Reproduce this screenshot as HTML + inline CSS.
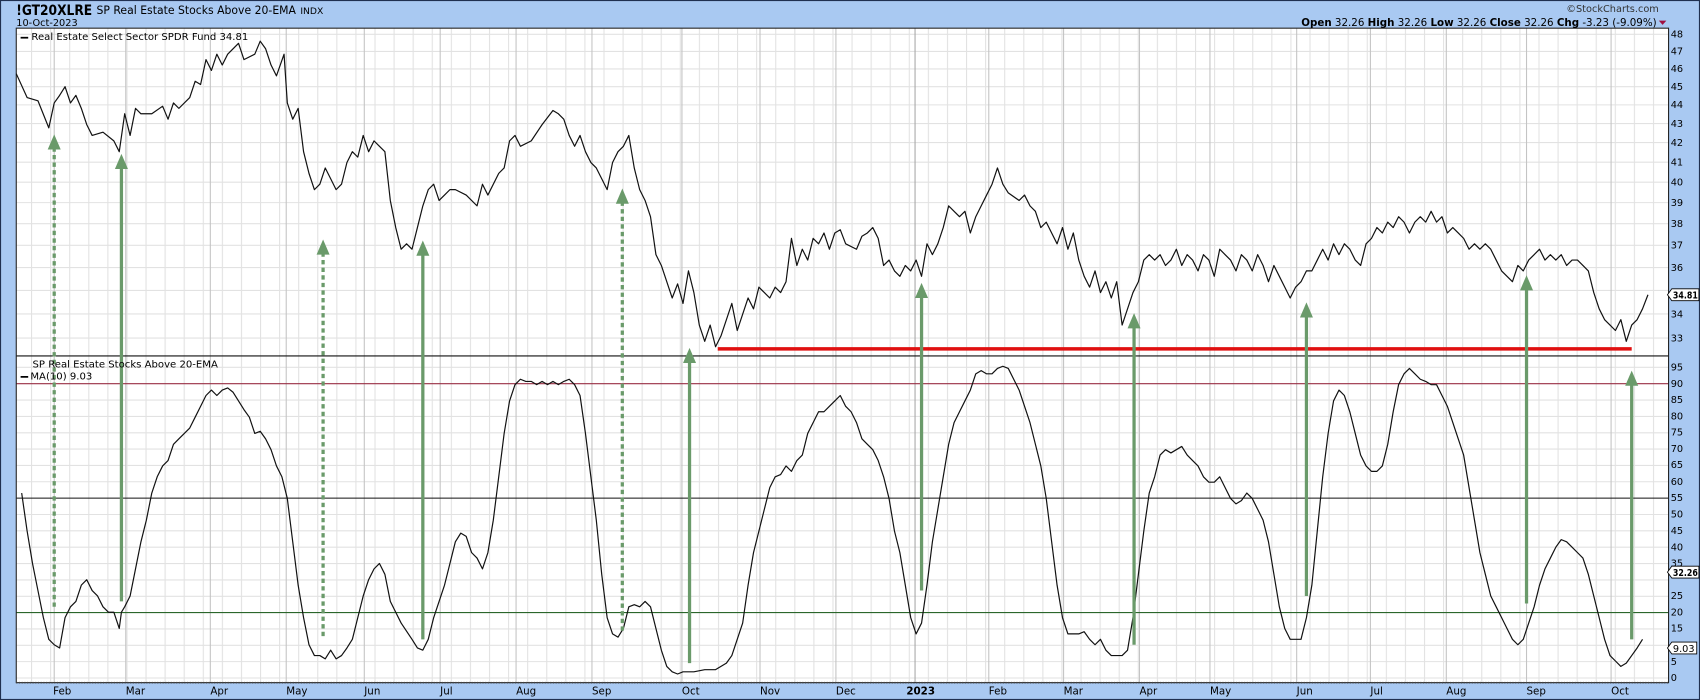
<!DOCTYPE html>
<html><head><meta charset="utf-8"><style>
html,body{margin:0;padding:0;background:#a9c9f2;}
svg{display:block}
text{font-family:"DejaVu Sans","Liberation Sans",sans-serif;}
</style></head><body>
<svg width="1700" height="700" viewBox="0 0 1568 646" preserveAspectRatio="none" xmlns="http://www.w3.org/2000/svg">
<defs>
<pattern id="wk" x="11" y="0" width="17.6" height="646" patternUnits="userSpaceOnUse">
<line x1="0.5" y1="0" x2="0.5" y2="646" stroke="#e2e2e2" stroke-width="1"/>
</pattern>
</defs>
<rect x="0" y="0" width="1568" height="646" fill="#a9c9f2"/>
<rect x="0.5" y="0.5" width="1567" height="645" fill="none" stroke="#203050" stroke-width="1"/>
<rect x="15" y="26" width="1524" height="604" fill="#fff"/>
<rect x="15" y="26" width="1524" height="604" fill="url(#wk)"/>
<g stroke="#e2e2e2" stroke-width="1">
<line x1="15" x2="1539" y1="289.7" y2="289.7"/><line x1="15" x2="1539" y1="268" y2="268"/><line x1="15" x2="1539" y1="246.9" y2="246.9"/><line x1="15" x2="1539" y1="226.4" y2="226.4"/><line x1="15" x2="1539" y1="206.4" y2="206.4"/><line x1="15" x2="1539" y1="187" y2="187"/><line x1="15" x2="1539" y1="168.1" y2="168.1"/><line x1="15" x2="1539" y1="149.7" y2="149.7"/><line x1="15" x2="1539" y1="131.6" y2="131.6"/><line x1="15" x2="1539" y1="114" y2="114"/><line x1="15" x2="1539" y1="96.8" y2="96.8"/><line x1="15" x2="1539" y1="80" y2="80"/><line x1="15" x2="1539" y1="63.6" y2="63.6"/><line x1="15" x2="1539" y1="47.5" y2="47.5"/><line x1="15" x2="1539" y1="31.7" y2="31.7"/><line x1="15" x2="1539" y1="312" y2="312"/>
<line x1="15" x2="1539" y1="610.6" y2="610.6"/><line x1="15" x2="1539" y1="595.5" y2="595.5"/><line x1="15" x2="1539" y1="580.4" y2="580.4"/><line x1="15" x2="1539" y1="550.3" y2="550.3"/><line x1="15" x2="1539" y1="535.2" y2="535.2"/><line x1="15" x2="1539" y1="520.1" y2="520.1"/><line x1="15" x2="1539" y1="505" y2="505"/><line x1="15" x2="1539" y1="489.9" y2="489.9"/><line x1="15" x2="1539" y1="474.8" y2="474.8"/><line x1="15" x2="1539" y1="444.6" y2="444.6"/><line x1="15" x2="1539" y1="429.5" y2="429.5"/><line x1="15" x2="1539" y1="414.4" y2="414.4"/><line x1="15" x2="1539" y1="399.4" y2="399.4"/><line x1="15" x2="1539" y1="384.3" y2="384.3"/><line x1="15" x2="1539" y1="369.2" y2="369.2"/><line x1="15" x2="1539" y1="339" y2="339"/><line x1="15" x2="1539" y1="625.7" y2="625.7"/>
</g>
<g stroke="#c4c4c4" stroke-width="1">
<line x1="50" x2="50" y1="26" y2="630"/><line x1="116" x2="116" y1="26" y2="630"/><line x1="194" x2="194" y1="26" y2="630"/><line x1="264" x2="264" y1="26" y2="630"/><line x1="336" x2="336" y1="26" y2="630"/><line x1="406" x2="406" y1="26" y2="630"/><line x1="476" x2="476" y1="26" y2="630"/><line x1="546" x2="546" y1="26" y2="630"/><line x1="629" x2="629" y1="26" y2="630"/><line x1="701" x2="701" y1="26" y2="630"/><line x1="771" x2="771" y1="26" y2="630"/><line x1="844" x2="844" y1="26" y2="630" stroke="#a8a8a8"/><line x1="912" x2="912" y1="26" y2="630"/><line x1="981" x2="981" y1="26" y2="630"/><line x1="1051" x2="1051" y1="26" y2="630"/><line x1="1116" x2="1116" y1="26" y2="630"/><line x1="1196" x2="1196" y1="26" y2="630"/><line x1="1264" x2="1264" y1="26" y2="630"/><line x1="1334" x2="1334" y1="26" y2="630"/><line x1="1408" x2="1408" y1="26" y2="630"/><line x1="1486" x2="1486" y1="26" y2="630"/>
</g>
<line x1="15" x2="1539" y1="354.1" y2="354.1" stroke="#992f44" stroke-width="1"/>
<line x1="15" x2="1539" y1="459.7" y2="459.7" stroke="#111" stroke-width="1"/>
<line x1="15" x2="1539" y1="565.3" y2="565.3" stroke="#2b662b" stroke-width="1"/>
<line x1="15" x2="1539" y1="328.5" y2="328.5" stroke="#111" stroke-width="1"/>
<rect x="15" y="26" width="1524" height="604" fill="none" stroke="#222" stroke-width="1"/>
<line x1="15" x2="1539" y1="630" y2="630" stroke="#444" stroke-width="1.5" stroke-dasharray="1,1.5"/>

<polyline fill="none" stroke="#111" stroke-width="1.1" stroke-linejoin="round" points="15,68 25,90 35,93 45,118 50,95 55,88 60,80 65,95 70,88 75,100 80,115 85,125 95,122 105,130 110,140 115,105 120,125 125,100 130,105 140,105 150,98 155,110 160,95 165,100 175,90 180,75 185,78 190,55 195,65 200,50 205,60 210,50 220,40 225,55 235,50 240,38 245,45 250,60 255,70 262,50 265,95 270,110 275,100 280,140 285,160 290,175 295,170 300,155 305,165 310,175 315,170 320,150 325,140 330,145 335,125 340,140 345,130 350,135 355,140 360,185 365,210 370,230 375,225 380,230 385,210 390,190 395,175 400,170 405,185 410,180 415,175 420,175 430,180 440,190 445,170 450,180 460,160 465,155 470,130 475,125 480,135 490,130 500,115 510,102 515,105 520,110 525,125 530,135 535,125 540,140 545,150 550,155 555,165 560,175 565,150 570,140 575,135 580,125 585,155 590,175 595,185 600,200 605,235 610,245 615,260 620,275 625,262 630,280 635,250 640,270 645,300 650,315 655,300 660,320 665,310 670,295 675,280 680,305 685,290 690,275 695,285 700,265 705,270 710,275 715,265 720,270 725,260 730,220 735,245 740,230 745,240 750,220 755,225 760,215 765,230 770,215 775,212 780,225 790,230 795,218 800,215 805,210 810,220 815,245 820,240 825,250 830,255 835,245 840,250 845,240 850,255 855,225 860,235 865,225 870,210 875,190 880,195 885,200 890,195 895,215 900,200 905,190 910,180 915,170 920,155 925,170 930,178 940,185 945,180 950,190 955,195 960,210 965,205 970,215 975,225 980,210 985,230 990,215 995,240 1000,255 1005,265 1010,250 1015,270 1020,260 1025,275 1030,260 1035,300 1040,285 1045,270 1050,260 1055,240 1060,235 1065,240 1070,235 1075,245 1080,240 1085,230 1090,245 1095,235 1100,240 1105,250 1110,235 1115,240 1120,255 1125,230 1130,235 1135,240 1140,250 1145,235 1150,240 1155,250 1160,235 1165,245 1170,260 1175,245 1180,255 1185,265 1190,275 1195,265 1200,260 1205,250 1210,250 1215,240 1220,230 1225,240 1230,225 1235,235 1240,225 1245,230 1250,240 1255,245 1260,225 1265,220 1270,210 1275,215 1280,205 1285,210 1290,200 1295,205 1300,215 1305,205 1310,200 1315,205 1320,195 1325,205 1330,200 1335,215 1340,210 1345,215 1350,220 1355,230 1360,225 1365,230 1370,225 1375,230 1380,240 1385,250 1390,255 1395,260 1400,245 1405,250 1410,240 1415,235 1420,230 1425,240 1430,235 1435,240 1440,235 1445,245 1450,240 1455,240 1460,245 1465,250 1470,270 1475,285 1480,295 1485,300 1490,305 1495,295 1500,315 1505,300 1510,295 1515,285 1520,272"/>

<polyline fill="none" stroke="#111" stroke-width="1.1" stroke-linejoin="round" points="20,455 25,490 30,520 35,545 40,570 45,590 50,595 55,598 60,570 65,560 70,555 75,540 80,535 85,545 90,550 95,560 100,565 105,565 110,580 112,565 115,560 120,550 125,525 130,500 135,480 140,455 145,440 150,430 155,425 160,410 165,405 170,400 175,395 180,385 185,375 190,365 195,360 200,365 205,360 210,358 215,362 220,370 225,378 230,385 235,400 240,398 245,405 250,415 255,430 260,440 265,460 270,500 275,540 280,570 285,595 290,605 295,605 300,608 305,600 310,608 315,605 320,598 325,590 330,570 335,550 340,535 345,525 350,520 355,530 360,555 365,565 370,575 380,590 385,598 390,600 395,590 400,570 405,555 410,540 415,520 420,500 425,492 430,495 435,510 440,515 445,525 450,510 455,480 460,440 465,400 470,370 475,355 480,350 485,352 490,352 495,355 500,352 505,355 510,352 515,355 520,352 525,350 530,355 535,365 540,400 545,440 550,480 555,530 560,570 565,585 570,588 575,580 580,560 585,558 590,560 595,555 600,560 605,580 610,600 615,615 620,620 625,622 630,620 640,620 650,618 660,618 670,612 675,605 680,590 685,575 690,540 695,510 700,490 705,470 710,450 715,440 720,438 725,430 730,435 735,425 740,420 745,400 750,390 755,380 760,380 765,375 770,370 775,365 780,375 785,380 790,390 795,405 800,410 805,415 810,425 815,440 820,460 825,490 830,510 835,540 840,570 845,585 850,575 855,540 860,500 865,470 870,440 875,410 880,390 885,380 890,370 895,360 900,345 905,342 910,345 915,345 920,340 925,338 930,340 935,350 940,360 945,375 950,390 955,410 960,430 965,460 970,500 975,540 980,570 985,585 990,585 995,585 1000,583 1005,590 1010,595 1015,590 1020,600 1025,605 1030,605 1035,605 1040,600 1045,570 1050,530 1055,490 1060,455 1065,440 1070,420 1075,415 1080,418 1085,415 1090,412 1095,420 1100,425 1105,430 1110,440 1115,445 1120,445 1125,440 1130,450 1135,460 1140,465 1145,462 1150,455 1155,460 1160,470 1165,480 1170,500 1175,530 1180,560 1185,580 1190,590 1195,590 1200,590 1205,570 1210,540 1215,490 1220,440 1225,400 1230,370 1235,360 1240,365 1245,380 1250,400 1255,420 1260,430 1265,435 1270,435 1275,430 1280,410 1285,380 1290,355 1295,345 1300,340 1305,345 1310,350 1315,352 1320,355 1325,355 1330,365 1335,375 1340,390 1345,405 1350,420 1355,450 1360,480 1365,510 1370,530 1375,550 1380,560 1385,570 1390,580 1395,590 1400,595 1405,590 1410,575 1415,560 1420,540 1425,525 1430,515 1435,505 1440,498 1445,500 1450,505 1455,510 1460,515 1465,530 1470,550 1475,570 1480,590 1485,605 1490,610 1495,615 1500,612 1505,605 1510,598 1515,590"/>

<line x1="662" x2="1505" y1="322" y2="322" stroke="#e01010" stroke-width="3.2"/>

<g stroke="#6a9a6a" stroke-width="3" fill="#6a9a6a">
<line x1="50" x2="50" y1="136" y2="560" stroke-dasharray="4,3"/><polygon points="50,124 44,138 56,138" stroke="none"/>
<line x1="112" x2="112" y1="154" y2="555"/><polygon points="112,142 106,156 118,156" stroke="none"/>
<line x1="298" x2="298" y1="233" y2="588" stroke-dasharray="4,3"/><polygon points="298,221 292,235 304,235" stroke="none"/>
<line x1="390" x2="390" y1="234" y2="590"/><polygon points="390,222 384,236 396,236" stroke="none"/>
<line x1="574" x2="574" y1="186" y2="583" stroke-dasharray="4,3"/><polygon points="574,174 568,188 580,188" stroke="none"/>
<line x1="636" x2="636" y1="333" y2="612"/><polygon points="636,321 630,335 642,335" stroke="none"/>
<line x1="850" x2="850" y1="273" y2="545"/><polygon points="850,261 844,275 856,275" stroke="none"/>
<line x1="1046" x2="1046" y1="301" y2="595"/><polygon points="1046,289 1040,303 1052,303" stroke="none"/>
<line x1="1205" x2="1205" y1="291" y2="550"/><polygon points="1205,279 1199,293 1211,293" stroke="none"/>
<line x1="1408" x2="1408" y1="266" y2="557"/><polygon points="1408,254 1402,268 1414,268" stroke="none"/>
<line x1="1505" x2="1505" y1="354" y2="590"/><polygon points="1505,342 1499,356 1511,356" stroke="none"/>
</g>

<g font-size="11" fill="#000">
<text x="15" y="14" font-weight="bold" font-family="Liberation Sans,sans-serif" font-size="13" textLength="70" lengthAdjust="spacingAndGlyphs">!GT20XLRE</text>
<text x="89" y="13" font-family="Liberation Sans,sans-serif" font-size="10.5" textLength="184" lengthAdjust="spacingAndGlyphs">SP Real Estate Stocks Above 20-EMA</text>
<text x="277" y="13" font-family="Liberation Sans,sans-serif" font-size="8.5">INDX</text>
<text x="15" y="24" font-family="Liberation Sans,sans-serif" font-size="9">10-Oct-2023</text>
<text x="1530" y="11" text-anchor="end" font-size="9" fill="#333">©StockCharts.com</text>
<text x="1528" y="24" text-anchor="end" font-family="Liberation Sans,sans-serif" font-size="9.5"><tspan font-weight="bold">Open</tspan> 32.26 <tspan font-weight="bold">High</tspan> 32.26 <tspan font-weight="bold">Low</tspan> 32.26 <tspan font-weight="bold">Close</tspan> 32.26 <tspan font-weight="bold">Chg</tspan> -3.23 (-9.09%)</text>
<polygon points="1530,19 1537,19 1533.5,23" fill="#a01040"/>
<rect x="19" y="34" width="7" height="1.6" fill="#000"/>
<text x="29" y="37" font-size="9.3">Real Estate Select Sector SPDR Fund 34.81</text>
<text x="30" y="339" font-size="9.3">SP Real Estate Stocks Above 20-EMA</text>
<rect x="19" y="347" width="7" height="1.6" fill="#000"/>
<text x="28" y="350" font-size="9.3">MA(10) 9.03</text>
</g>

<g font-size="9" fill="#000" font-family="Liberation Sans,sans-serif">
<text x="1541" y="34.7">48</text><text x="1541" y="50.5">47</text><text x="1541" y="66.6">46</text><text x="1541" y="83">45</text><text x="1541" y="99.8">44</text><text x="1541" y="117">43</text><text x="1541" y="134.6">42</text><text x="1541" y="152.7">41</text><text x="1541" y="171.1">40</text><text x="1541" y="190">39</text><text x="1541" y="209.4">38</text><text x="1541" y="229.4">37</text><text x="1541" y="249.9">36</text><text x="1541" y="293">34</text><text x="1541" y="315">33</text>
<text x="1541" y="342">95</text><text x="1541" y="357">90</text><text x="1541" y="372">85</text><text x="1541" y="387">80</text><text x="1541" y="402">75</text><text x="1541" y="417">70</text><text x="1541" y="432">65</text><text x="1541" y="447.5">60</text><text x="1541" y="462.5">55</text><text x="1541" y="477.5">50</text><text x="1541" y="493">45</text><text x="1541" y="508">40</text><text x="1541" y="523">35</text><text x="1541" y="553">25</text><text x="1541" y="568">20</text><text x="1541" y="583">15</text><text x="1541" y="613.5">5</text><text x="1541" y="628.5">0</text>
</g>
<g font-family="Liberation Sans,sans-serif" font-weight="bold" font-size="9">
<polygon points="1538,272 1542,266.5 1567,266.5 1567,277.5 1542,277.5" fill="#fff" stroke="#000" stroke-width="0.8"/><text x="1543" y="275.5" textLength="23" lengthAdjust="spacingAndGlyphs">34.81</text>
<polygon points="1538,528 1542,522.5 1567,522.5 1567,533.5 1542,533.5" fill="#fff" stroke="#000" stroke-width="0.8"/><text x="1543" y="531.5" textLength="23" lengthAdjust="spacingAndGlyphs">32.26</text>
<polygon points="1538,598 1542,592.5 1565,592.5 1565,603.5 1542,603.5" fill="#fff" stroke="#000" stroke-width="0.8"/><text x="1543" y="601.5" font-weight="normal" textLength="20" lengthAdjust="spacingAndGlyphs">9.03</text>
</g>
<g font-family="Liberation Sans,sans-serif" font-size="9.5" fill="#000">
<text x="49" y="641">Feb</text><text x="116" y="641">Mar</text><text x="194" y="641">Apr</text><text x="264" y="641">May</text><text x="336" y="641">Jun</text><text x="406" y="641">Jul</text><text x="476" y="641">Aug</text><text x="546" y="641">Sep</text><text x="629" y="641">Oct</text><text x="701" y="641">Nov</text><text x="771" y="641">Dec</text><text x="836" y="641" font-weight="bold">2023</text><text x="912" y="641">Feb</text><text x="981" y="641">Mar</text><text x="1051" y="641">Apr</text><text x="1116" y="641">May</text><text x="1196" y="641">Jun</text><text x="1264" y="641">Jul</text><text x="1334" y="641">Aug</text><text x="1408" y="641">Sep</text><text x="1486" y="641">Oct</text>
</g>
</svg>
</body></html>
